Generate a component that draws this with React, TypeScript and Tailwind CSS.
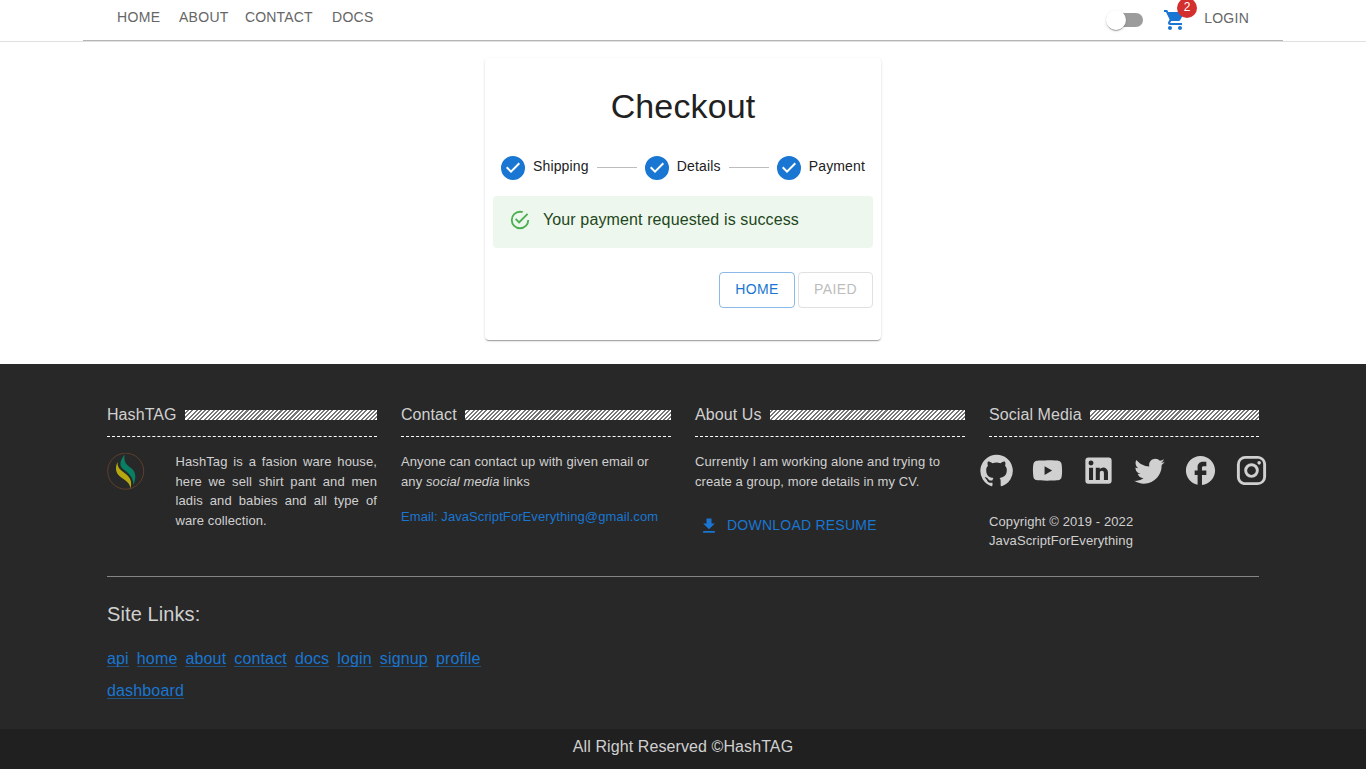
import React from 'react';
import { MdShoppingCart, MdDownload } from 'react-icons/md';

const socialIcons = [
  { name: 'GitHub', d: 'M12 1.27a11 11 0 00-3.48 21.46c.55.09.73-.28.73-.55v-1.84c-3.03.64-3.67-1.46-3.67-1.46-.55-1.29-1.28-1.65-1.28-1.65-.92-.65.1-.65.1-.65 1.1 0 1.73 1.1 1.73 1.1.92 1.65 2.57 1.2 3.21.92a2 2 0 01.64-1.47c-2.47-.27-5.04-1.19-5.04-5.5 0-1.1.46-2.1 1.2-2.84a3.76 3.76 0 010-2.93s.91-.28 3.11 1.1c1.8-.49 3.7-.49 5.5 0 2.1-1.38 3.02-1.1 3.02-1.1a3.76 3.76 0 01.1 2.93c.83.74 1.2 1.74 1.2 2.94 0 4.21-2.57 5.13-5.04 5.4.45.37.82.92.82 2.02v3.03c0 .27.1.64.73.55A11 11 0 0012 1.27' },
  { name: 'YouTube', d: 'M10 15l5.19-3L10 9v6m11.56-7.83c.13.47.22 1.1.28 1.9.07.8.1 1.49.1 2.09L22 12c0 2.19-.16 3.8-.44 4.83-.25.9-.83 1.48-1.73 1.73-.47.13-1.33.22-2.65.28-1.3.07-2.49.1-3.59.1L12 19c-4.19 0-6.8-.16-7.83-.44-.9-.25-1.48-.83-1.73-1.73-.13-.47-.22-1.1-.28-1.9-.07-.8-.1-1.49-.1-2.09L2 12c0-2.19.16-3.8.44-4.83.25-.9.83-1.48 1.73-1.73.47-.13 1.33-.22 2.65-.28 1.3-.07 2.49-.1 3.59-.1L12 5c4.19 0 6.8.16 7.83.44.9.25 1.48.83 1.73 1.73z' },
  { name: 'LinkedIn', d: 'M19 3a2 2 0 0 1 2 2v14a2 2 0 0 1-2 2H5a2 2 0 0 1-2-2V5a2 2 0 0 1 2-2h14m-.5 15.5v-5.3a3.26 3.26 0 0 0-3.26-3.26c-.85 0-1.84.52-2.32 1.3v-1.11h-2.79v8.37h2.79v-4.93c0-.77.62-1.4 1.39-1.4a1.4 1.4 0 0 1 1.4 1.4v4.93h2.79M6.88 8.56a1.68 1.68 0 0 0 1.68-1.68c0-.93-.75-1.69-1.68-1.69a1.69 1.69 0 0 0-1.69 1.69c0 .93.76 1.68 1.69 1.68m1.39 9.94v-8.37H5.5v8.37h2.77z' },
  { name: 'Twitter', d: 'M22.46 6c-.77.35-1.6.58-2.46.69.88-.53 1.56-1.37 1.88-2.38-.83.5-1.75.85-2.72 1.05C18.37 4.5 17.26 4 16 4c-2.35 0-4.27 1.92-4.27 4.29 0 .34.04.67.11.98C8.28 9.09 5.11 7.38 3 4.79c-.37.63-.58 1.37-.58 2.15 0 1.49.75 2.81 1.91 3.56-.71 0-1.37-.2-1.95-.5v.03c0 2.08 1.48 3.82 3.44 4.21a4.22 4.22 0 0 1-1.93.07 4.28 4.28 0 0 0 4 2.98 8.521 8.521 0 0 1-5.33 1.84c-.34 0-.68-.02-1.02-.06C3.44 20.29 5.7 21 8.12 21 16 21 20.33 14.46 20.33 8.79c0-.19 0-.37-.01-.56.84-.6 1.56-1.36 2.14-2.23z' },
  { name: 'Facebook', d: 'M22 12c0-5.52-4.48-10-10-10S2 6.48 2 12c0 4.84 3.44 8.87 8 9.8V15H8v-3h2V9.5C10 7.57 11.57 6 13.5 6H16v3h-2c-.55 0-1 .45-1 1v2h3v3h-3v6.95c5.05-.5 9-4.76 9-9.95z' },
  { name: 'Instagram', d: 'M7.8 2h8.4C19.4 2 22 4.6 22 7.8v8.4a5.8 5.8 0 0 1-5.8 5.8H7.8C4.6 22 2 19.4 2 16.2V7.8A5.8 5.8 0 0 1 7.8 2m-.2 2A3.6 3.6 0 0 0 4 7.6v8.8C4 18.39 5.61 20 7.6 20h8.8a3.6 3.6 0 0 0 3.6-3.6V7.6C20 5.61 18.39 4 16.4 4H7.6m9.65 1.5a1.25 1.25 0 0 1 1.25 1.25A1.25 1.25 0 0 1 17.25 8 1.25 1.25 0 0 1 16 6.75a1.25 1.25 0 0 1 1.25-1.25M12 7a5 5 0 0 1 5 5 5 5 0 0 1-5 5 5 5 0 0 1-5-5 5 5 0 0 1 5-5m0 2a3 3 0 0 0-3 3 3 3 0 0 0 3 3 3 3 0 0 0 3-3 3 3 0 0 0-3-3z' },
];

const siteLinks = ['api', 'home', 'about', 'contact', 'docs', 'login', 'signup', 'profile', 'dashboard'];

function Header() {
  return (
    <header className="h-[42px] border-b border-[#e0e0e0]">
      <div className="mx-auto flex h-[41px] w-[1200px] justify-between border-b border-[#b5b5b5] px-[34px] text-sm leading-5 tracking-[0.02857em] text-[#666]">
        <nav className="flex pt-[7px]">
          <a className="w-[62px]">HOME</a>
          <a className="w-[66px] tracking-[0.02em]">ABOUT</a>
          <a className="w-[87px] tracking-[0.01em]">CONTACT</a>
          <a className="tracking-[0.02em]">DOCS</a>
        </nav>
        <div className="flex items-start">
          <div className="mt-[13px] flex h-[14px] w-[34px] items-center rounded-full bg-[#9c9c9c]">
            <span className="-ml-[3px] size-5 shrink-0 rounded-full bg-white shadow-[0_2px_1px_-1px_rgba(0,0,0,0.2),0_1px_1px_rgba(0,0,0,0.14),0_1px_3px_rgba(0,0,0,0.12)]" />
          </div>
          <div className="relative ml-5 mt-2">
            <MdShoppingCart size={24} color="#1976d2" />
            <span className="absolute -top-[10px] left-[14px] flex size-5 items-center justify-center rounded-full bg-[#d32f2f] pb-0.5 text-xs leading-3 tracking-normal text-white">2</span>
          </div>
          <a className="ml-[17px] pt-2 tracking-[0.018em]">LOGIN</a>
        </div>
      </div>
    </header>
  );
}

function Step({ label }: { label: string }) {
  return (
    <div className="flex items-center">
      <svg viewBox="0 0 24 24" className="mr-2 size-6 fill-[#1976d2]">
        <path d="M12 0a12 12 0 1 0 0 24 12 12 0 0 0 0-24zm-2 17l-5-5 1.4-1.4 3.6 3.6 7.6-7.6L19 8l-9 9z" />
      </svg>
      <span className="pb-1 text-sm leading-5 tracking-[0.01071em]">{label}</span>
    </div>
  );
}

function StepLine() {
  return <div className="mx-2 -mt-px h-px flex-1 bg-[#bdbdbd]" />;
}

function CheckoutCard() {
  return (
    <section className="mx-auto h-[282px] w-[396px] rounded bg-white px-2 pt-[23px] text-[#212121] shadow-[0_2px_1px_-1px_rgba(0,0,0,0.2),0_1px_1px_rgba(0,0,0,0.14),0_1px_3px_rgba(0,0,0,0.12)]">
      <h1 className="text-center text-[34px] leading-[50px] tracking-[0.004em]">Checkout</h1>
      <div className="mt-[25px] flex h-6 items-center px-2">
        <Step label="Shipping" />
        <StepLine />
        <Step label="Details" />
        <StepLine />
        <Step label="Payment" />
      </div>
      <div className="mt-4 flex h-[52px] items-start rounded bg-[#edf7ed] px-4 text-[#1e4620]">
        <svg viewBox="0 0 24 24" className="mr-3 mt-[13px] size-[22px] fill-[#4caf50]">
          <path d="M20,12A8,8 0 0,1 12,20A8,8 0 0,1 4,12A8,8 0 0,1 12,4C12.76,4 13.5,4.11 14.2,4.31L15.77,2.74C14.61,2.26 13.34,2 12,2A10,10 0 0,0 2,12A10,10 0 0,0 12,22A10,10 0 0,0 22,12M7.91,10.08L6.5,11.5L11,16L21,6L19.59,4.58L11,13.17L7.91,10.08Z" />
        </svg>
        <p className="pt-3 text-base leading-6 tracking-[0.0075em]">Your payment requested is success</p>
      </div>
      <div className="mt-6 flex justify-end gap-[3px] text-sm tracking-[0.02857em]">
        <button className="h-9 w-[76px] rounded border border-[#1976d2]/50 pb-0.5 text-[#1976d2]">HOME</button>
        <button className="h-9 w-[75px] rounded border border-[#e0e0e0] pb-0.5 text-[#bdbdbd]">PAIED</button>
      </div>
    </section>
  );
}

function Column({ title, children }: { title: string; children: React.ReactNode }) {
  return (
    <div className="w-[270px]">
      <div className="flex h-6 items-center">
        <h2 className="mr-2 whitespace-nowrap pb-px text-base leading-6 tracking-[0.006em] first-letter:tracking-normal">{title}</h2>
        <div className="h-[10px] flex-1 bg-[repeating-linear-gradient(-45deg,#fff_0px,#fff_1.5px,#777_1.5px,#777_3px)]" />
      </div>
      <div className="mt-[9px] border-t border-dashed border-white" />
      <div className="pt-[15px] text-[13px] leading-[19.5px] tracking-[0.008em]">{children}</div>
    </div>
  );
}

function Logo() {
  return (
    <svg viewBox="0 0 38 38" className="mt-px size-[38px] shrink-0">
      <circle cx="18.7" cy="18.2" r="18" fill="none" stroke="#65412d" strokeWidth="0.9" />
      <path d="M17.5 1.5C13 8 12 12 15.500 15.500C20 19.500 26 22 26.500 32C29.500 24 29 19 24 15C18 11 17 8 17.500 1.500Z" fill="#087e63" />
      <path d="M10.500 9C8 14.500 8.500 20 13 23.500C18.500 28 22.500 29 23.500 35.500C25.500 28 23 24 17.500 20C12 16 10.500 14 10.500 9Z" fill="#b6a910" />
    </svg>
  );
}

function Footer() {
  return (
    <footer className="h-[405px] bg-[#282828] text-[#d0d0d0]">
      <div className="mx-auto h-[365px] w-[1152px] pt-[39px]">
        <div className="flex h-[174px] gap-6 border-b border-[#858585]">
          <Column title="HashTAG">
            <div className="flex justify-between">
              <Logo />
              <p className="w-[201.5px] text-justify">HashTag is a fasion ware house, here we sell shirt pant and men ladis and babies and all type of ware collection.</p>
            </div>
          </Column>
          <Column title="Contact">
            <p>Anyone can contact up with given email or<br />any <em>social media</em> links</p>
            <a className="mt-4 block whitespace-nowrap tracking-[0.0065em] text-[#1976d2]">Email: JavaScriptForEverything@gmail.com</a>
          </Column>
          <Column title="About Us">
            <p>Currently I am working alone and trying to create a group, more details in my CV.</p>
            <a className="mt-[22px] flex items-center pl-1 text-sm leading-[22px] tracking-[0.0165em] text-[#1976d2]">
              <MdDownload size={20} className="mr-2 mt-[3px]" />DOWNLOAD RESUME
            </a>
          </Column>
          <Column title="Social Media">
            <div className="-ml-[10px] flex gap-4 pt-[0.5px]">
              {socialIcons.map((icon) => (
                <svg key={icon.name} viewBox="0 0 24 24" className="size-[35px] shrink-0 fill-current"><path d={icon.d} /></svg>
              ))}
            </div>
            <p className="mt-6">Copyright © 2019 - 2022<br />JavaScriptForEverything</p>
          </Column>
        </div>
        <h2 className="mt-[21px] text-xl leading-8 tracking-[0.005em]">Site Links:</h2>
        <div className="mt-3 flex w-[384px] flex-wrap gap-x-2 text-base leading-8 tracking-[0.00938em] text-[#1976d2]">
          {siteLinks.map((link) => (
            <a key={link} className="flex h-8 items-center">
              <span className="h-[17px] border-b border-[#215282] leading-[17px]">{link}</span>
            </a>
          ))}
        </div>
      </div>
      <div className="h-10 bg-[#202020] pt-1.5 text-center text-base leading-6 tracking-[0.006em]">All Right Reserved ©HashTAG</div>
    </footer>
  );
}

export default function App() {
  return (
    <div className="h-[769px] overflow-hidden bg-white font-[Nimbus_Sans,'Liberation_Sans',sans-serif]">
      <Header />
      <main className="h-[322px] pt-4"><CheckoutCard /></main>
      <Footer />
    </div>
  );
}
